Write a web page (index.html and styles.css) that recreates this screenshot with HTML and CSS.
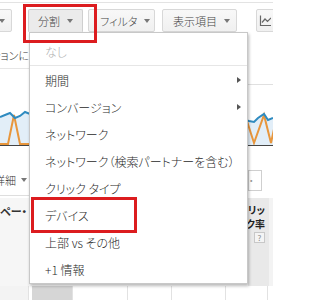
FILE: index.html
```html
<!DOCTYPE html>
<html lang="ja">
<head>
<meta charset="utf-8">
<title>分割メニュー</title>
<link rel="stylesheet" href="styles.css">
</head>
<body>
<div class="page">
  <div class="topline"></div>
  <div class="toolbar">
    <div class="btn btn-cut"><span class="caret"></span></div>
    <div class="btn btn-seg">分割<span class="caret"></span></div>
    <div class="btn btn-filter">フィルタ<span class="caret"></span></div>
    <div class="btn btn-cols">表示項目<span class="caret"></span></div>
    <div class="btn btn-chart">
      <svg class="chart-icon" width="12" height="12" viewBox="0 0 12 12">
        <path d="M1.5 0.5 V10.5 H12" fill="none" stroke="#666" stroke-width="1.2"/>
        <polyline points="3,7.5 6,4 8.5,6.5 12,3" fill="none" stroke="#666" stroke-width="1.2"/>
      </svg>
    </div>
  </div>
  <div class="row-c">
    <div class="left-text">ションに</div>
    <div class="right-rule"></div>
  </div>
  <svg class="chart" width="273" height="65" viewBox="0 0 273 65">
    <polygon fill="#e2eef8" points="0,32 5,30 10,28 15,33 20,31 25,27 30,29 245,35 249,36 254,37 258,33 264,29 268,35 273,33 273,60 0,60"/>
    <polyline fill="none" stroke="#e8963c" stroke-width="2" points="0,59 8,59 14,30 20,59 30,59 240,59 246,33 254,58 264,30 271,58 276,35"/>
    <polyline fill="none" stroke="#2f8bc0" stroke-width="2" points="0,32 5,30 10,28 15,33 20,31 25,27 30,29 245,35 249,36 254,37 258,33 264,29 268,35 273,33"/>
    <line x1="0" y1="60.5" x2="273" y2="60.5" stroke="#444" stroke-width="1"/>
  </svg>
  <div class="row-e">
    <div class="detail">詳細<span class="caret"></span></div>
    <div class="right-box"><div class="inputbox">・</div></div>
  </div>
  <div class="thead">
    <div class="th-left">・ペー</div>
    <div class="th-right">
      <div class="th-label">クリッ<br>ク率</div>
      <span class="help">?</span>
    </div>
  </div>
  <div class="tbody">
    <div class="cell c1"></div>
    <div class="cell c2"><div class="bar"></div></div>
    <div class="cell c3"></div>
    <div class="cell c4"></div>
    <div class="cell c5"></div>
    <div class="cell c6"></div>
    <div class="cell c7"></div>
  </div>
</div>

<div class="menu">
  <div class="item disabled">なし</div>
  <div class="sep"></div>
  <div class="item sub">期間</div>
  <div class="item sub">コンバージョン</div>
  <div class="item">ネットワーク</div>
  <div class="item">ネットワーク（検索パートナーを含む）</div>
  <div class="item">クリック タイプ</div>
  <div class="item">デバイス</div>
  <div class="item">上部 vs その他</div>
  <div class="item">+1 情報</div>
</div>

<div class="hl hl-seg"></div>
<div class="hl hl-device"></div>
</body>
</html>
```

FILE: styles.css
```css
* { box-sizing: border-box; }
html, body {
  margin: 0;
  padding: 0;
}
body {
  width: 273px;
  height: 300px;
  overflow: hidden;
  position: relative;
  background: #fff;
  font-family: "Noto Sans CJK JP", "Noto Sans", sans-serif;
  font-feature-settings: "palt";
  color: #333;
}
.page {
  width: 273px;
  display: flex;
  flex-direction: column;
}
.topline {
  height: 3px;
  border-bottom: 1px solid #e3e3e3;
}
.toolbar {
  display: flex;
  padding-top: 6px;
  height: 32px;
}
.btn {
  flex: none;
  height: 23px;
  display: flex;
  align-items: center;
  font-size: 11px;
  font-weight: 300;
  color: #444;
  background: linear-gradient(#f8f8f8, #f0f0f0);
  border: 1px solid #d8d8d8;
  border-radius: 2px;
  white-space: nowrap;
}
.caret {
  display: inline-block;
  width: 0;
  height: 0;
  border-left: 3.5px solid transparent;
  border-right: 3.5px solid transparent;
  border-top: 4px solid #777;
  margin-left: 7px;
}
.btn-cut {
  width: 40px;
  margin-left: -28px;
  justify-content: flex-end;
  padding-right: 6px;
}
.btn-seg {
  width: 55px;
  margin-left: 16px;
  padding-left: 9px;
  background: #ebebeb;
  border-color: #cfcfcf;
  border-bottom-color: #ebebeb;
  border-radius: 2px 2px 0 0;
}
.btn-filter {
  width: 67px;
  margin-left: 5px;
  padding-left: 11px;
}
.btn-cols {
  width: 75px;
  margin-left: 7px;
  padding-left: 10px;
}
.btn-chart {
  width: 30px;
  margin-left: 19px;
  padding-left: 2px;
}
.chart-icon { display: block; }

.row-c {
  height: 50px;
  display: flex;
  justify-content: space-between;
}
.left-text {
  width: 29px;
  height: 34px;
  border-bottom: 1px solid #e6e6e6;
  font-size: 11px;
  font-weight: 300;
  line-height: 40px;
  white-space: nowrap;
  overflow: hidden;
  direction: rtl;
  text-align: left;
}
.right-rule {
  width: 25px;
  height: 50px;
  border-bottom: 1px solid #e0e0e0;
}
.chart {
  display: block;
}
.row-e {
  height: 48px;
  display: flex;
  justify-content: space-between;
}
.detail {
  width: 29px;
  height: 46px;
  border-bottom: 1px solid #dedede;
  display: flex;
  justify-content: flex-end;
  align-items: center;
  padding-top: 14px;
  padding-right: 2px;
  font-size: 11px;
  font-weight: 300;
  color: #333;
  white-space: nowrap;
  overflow: hidden;
}
.detail .caret { margin-left: 5px; }
.right-box {
  width: 25px;
  padding-top: 20px;
}
.inputbox {
  width: 14px;
  height: 21px;
  border: 1px solid #cfcfcf;
  background: #fff;
  font-size: 9px;
  color: #999;
  line-height: 19px;
}
.thead {
  height: 88px;
  display: flex;
  justify-content: space-between;
}
.th-left {
  width: 29px;
  background: #f6f6f6;
  font-size: 11px;
  font-weight: bold;
  line-height: 16px;
  padding-top: 5px;
  white-space: nowrap;
  overflow: hidden;
  direction: rtl;
  text-align: left;
}
.th-right {
  width: 25px;
  background: #e9e9e9;
  border-right: 4px solid #f3f3f3;
  display: flex;
  flex-direction: column;
  align-items: flex-end;
  padding-top: 5px;
  padding-right: 4px;
  overflow: hidden;
}
.th-label {
  font-size: 10px;
  font-weight: bold;
  line-height: 14px;
  text-align: right;
  white-space: nowrap;
  color: #222;
}
.help {
  margin-top: 1px;
  width: 11px;
  height: 11px;
  border: 1px solid #c8c8c8;
  background: #f4f4f4;
  font-size: 8px;
  line-height: 9px;
  text-align: center;
  color: #888;
}
.tbody {
  height: 15px;
  display: flex;
  border-bottom: 1px solid #dcdcdc;
}
.cell {
  height: 14px;
  flex: none;
  border-right: 1px solid #e2e2e2;
}
.c1 { width: 29px; background: #f3f3f3; }
.c2 { width: 44px; padding-left: 3px; }
.c2 .bar { height: 14px; background: #d6d6d6; }
.c3 { width: 55px; }
.c4 { width: 44px; }
.c5 { width: 54px; }
.c6 { width: 42px; }
.c7 { width: 5px; border-right: none; }

.menu {
  position: absolute;
  left: 29px;
  top: 32px;
  width: 219px;
  height: 252px;
  background: #fff;
  border: 1px solid #c8c8c8;
  box-shadow: 1px 2px 3px rgba(0, 0, 0, 0.28);
  padding-top: 5px;
}
.item {
  position: relative;
  height: 27px;
  line-height: 27px;
  padding-left: 15px;
  font-size: 12px;
  font-weight: 300;
  color: #2a2a2a;
  white-space: nowrap;
}
.item.disabled { color: #b0b0b0; }
.sep {
  height: 1px;
  background: #e6e6e6;
  margin-bottom: 1px;
}
.item.sub::after {
  content: "";
  position: absolute;
  right: 6px;
  top: 10px;
  width: 0;
  height: 0;
  border-top: 3.5px solid transparent;
  border-bottom: 3.5px solid transparent;
  border-left: 4px solid #555;
}
.hl {
  position: absolute;
  border: 3px solid #dc1c1f;
}
.hl-seg {
  left: 23px;
  top: 4px;
  width: 74px;
  height: 39px;
}
.hl-device {
  left: 31px;
  top: 197px;
  width: 106px;
  height: 36px;
}
```
